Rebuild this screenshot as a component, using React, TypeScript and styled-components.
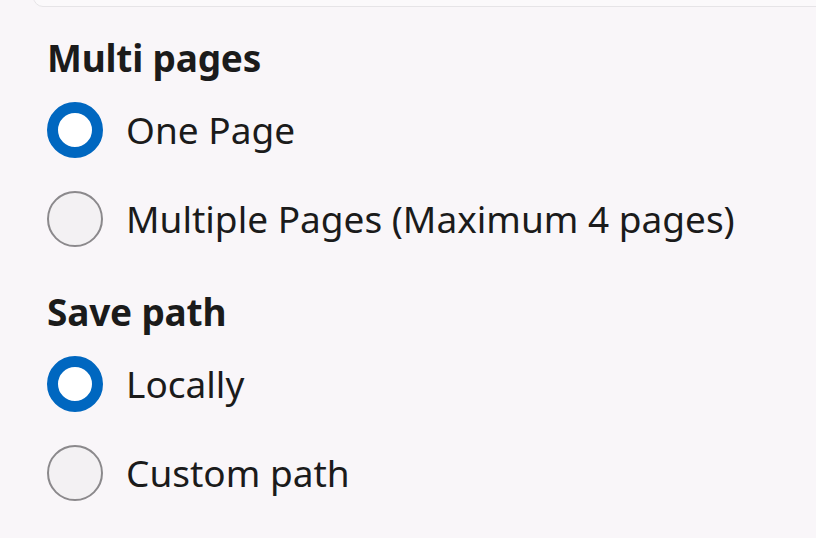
import styled, { createGlobalStyle } from "styled-components";

const GlobalStyle = createGlobalStyle`
  html, body {
    margin: 0;
    padding: 0;
    background: #f9f6f9;
  }
  body {
    font-family: "Noto Sans", "Open Sans", sans-serif;
    color: #1b1b1b;
  }
`;

type Option = { label: string; checked?: boolean };

const sections: { title: string; options: Option[] }[] = [
  {
    title: "Multi pages",
    options: [
      { label: "One Page", checked: true },
      { label: "Multiple Pages (Maximum 4 pages)" },
    ],
  },
  {
    title: "Save path",
    options: [{ label: "Locally", checked: true }, { label: "Custom path" }],
  },
];

const App = () => {
  return (
    <>
      <GlobalStyle />
      <Page>
        <TopCard />
        {sections.map((section) => (
          <Section key={section.title}>
            <Heading>{section.title}</Heading>
            <RadioGroup>
              {section.options.map((option) => (
                <RadioRow key={option.label}>
                  <RadioCircle $checked={!!option.checked} />
                  <RadioLabel>{option.label}</RadioLabel>
                </RadioRow>
              ))}
            </RadioGroup>
          </Section>
        ))}
      </Page>
    </>
  );
};

export default App;

const Page = styled.div`
  display: flex;
  flex-direction: column;
  width: 816px;
  height: 538px;
  overflow: hidden;
  padding-left: 47px;
  box-sizing: border-box;
`;

const TopCard = styled.div`
  margin: -30px -40px 0 -14px;
  height: 35px;
  border: 1px solid #e6e4e7;
  border-radius: 10px;
  background: #fbf9fb;
  flex-shrink: 0;
`;

const Section = styled.section`
  display: flex;
  flex-direction: column;
  margin-top: 29px;

  & + & {
    margin-top: 43px;
  }
`;

const Heading = styled.h2`
  margin: 0;
  font-size: 37px;
  font-weight: 700;
  line-height: 44px;
  letter-spacing: -0.2px;
`;

const RadioGroup = styled.div`
  display: flex;
  flex-direction: column;
  gap: 33px;
  margin-top: 22px;
`;

const RadioRow = styled.label`
  display: flex;
  align-items: center;
  gap: 23px;
  height: 56px;
`;

const RadioCircle = styled.span<{ $checked: boolean }>`
  width: 56px;
  height: 56px;
  border-radius: 50%;
  box-sizing: border-box;
  flex-shrink: 0;
  background: ${(p) => (p.$checked ? "#ffffff" : "#f3f1f3")};
  border: ${(p) => (p.$checked ? "11px solid #0067c0" : "2px solid #8b898c")};
`;

const RadioLabel = styled.span`
  font-size: 37px;
  line-height: 44px;
  font-weight: 400;
`;
